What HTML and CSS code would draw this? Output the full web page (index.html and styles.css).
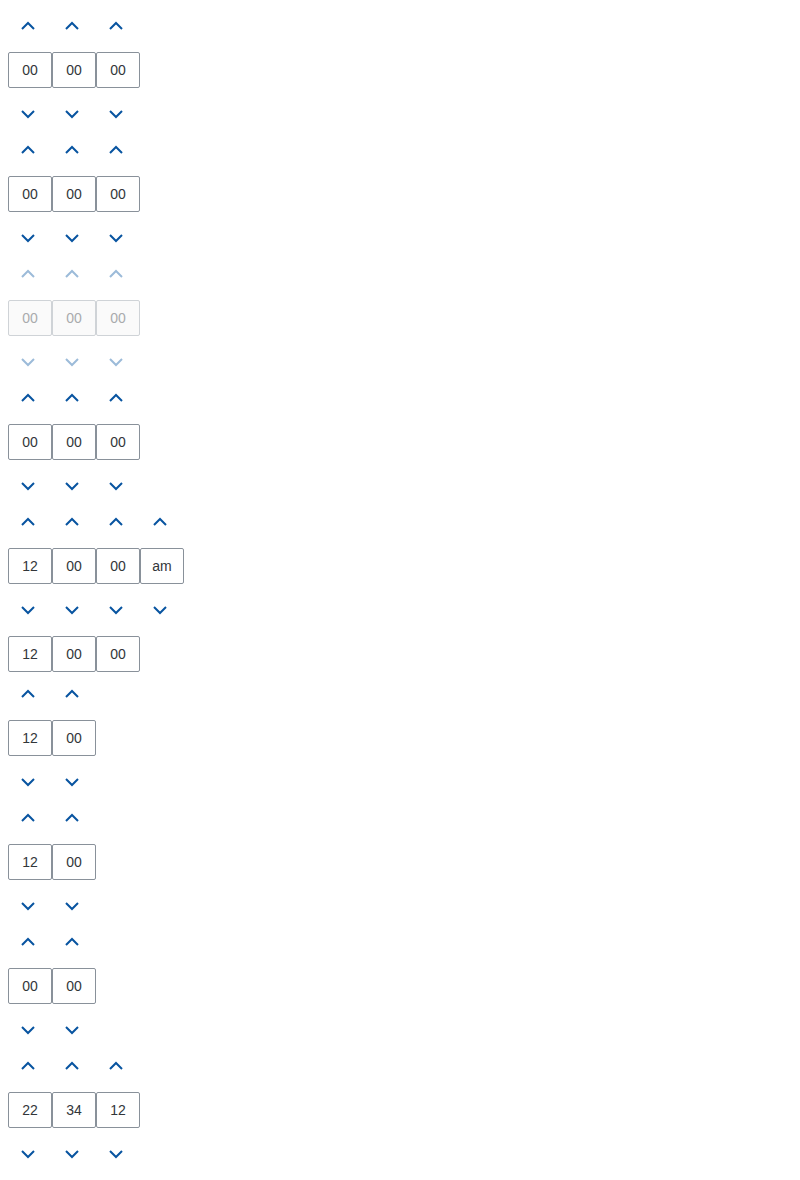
FILE: index.html
```html
<!DOCTYPE html>
<html>
<head>
<meta charset="utf-8">
<link rel="stylesheet" href="styles.css">
</head>
<body>
<div class="page">

  <div class="picker">
    <div class="btn-row"><button class="spin up"><svg viewBox="0 0 14 8"><polyline points="1,7 7,1 13,7"/></svg></button><button class="spin up"><svg viewBox="0 0 14 8"><polyline points="1,7 7,1 13,7"/></svg></button><button class="spin up"><svg viewBox="0 0 14 8"><polyline points="1,7 7,1 13,7"/></svg></button></div>
    <div class="field-row"><input class="field" value="00"><input class="field" value="00"><input class="field" value="00"></div>
    <div class="btn-row"><button class="spin"><svg viewBox="0 0 14 8"><polyline points="1,1 7,7 13,1"/></svg></button><button class="spin"><svg viewBox="0 0 14 8"><polyline points="1,1 7,7 13,1"/></svg></button><button class="spin"><svg viewBox="0 0 14 8"><polyline points="1,1 7,7 13,1"/></svg></button></div>
  </div>

  <div class="picker">
    <div class="btn-row"><button class="spin up"><svg viewBox="0 0 14 8"><polyline points="1,7 7,1 13,7"/></svg></button><button class="spin up"><svg viewBox="0 0 14 8"><polyline points="1,7 7,1 13,7"/></svg></button><button class="spin up"><svg viewBox="0 0 14 8"><polyline points="1,7 7,1 13,7"/></svg></button></div>
    <div class="field-row"><input class="field" value="00"><input class="field" value="00"><input class="field" value="00"></div>
    <div class="btn-row"><button class="spin"><svg viewBox="0 0 14 8"><polyline points="1,1 7,7 13,1"/></svg></button><button class="spin"><svg viewBox="0 0 14 8"><polyline points="1,1 7,7 13,1"/></svg></button><button class="spin"><svg viewBox="0 0 14 8"><polyline points="1,1 7,7 13,1"/></svg></button></div>
  </div>

  <div class="picker disabled">
    <div class="btn-row"><button class="spin up" disabled><svg viewBox="0 0 14 8"><polyline points="1,7 7,1 13,7"/></svg></button><button class="spin up" disabled><svg viewBox="0 0 14 8"><polyline points="1,7 7,1 13,7"/></svg></button><button class="spin up" disabled><svg viewBox="0 0 14 8"><polyline points="1,7 7,1 13,7"/></svg></button></div>
    <div class="field-row"><input class="field" value="00" disabled><input class="field" value="00" disabled><input class="field" value="00" disabled></div>
    <div class="btn-row"><button class="spin" disabled><svg viewBox="0 0 14 8"><polyline points="1,1 7,7 13,1"/></svg></button><button class="spin" disabled><svg viewBox="0 0 14 8"><polyline points="1,1 7,7 13,1"/></svg></button><button class="spin" disabled><svg viewBox="0 0 14 8"><polyline points="1,1 7,7 13,1"/></svg></button></div>
  </div>

  <div class="picker">
    <div class="btn-row"><button class="spin up"><svg viewBox="0 0 14 8"><polyline points="1,7 7,1 13,7"/></svg></button><button class="spin up"><svg viewBox="0 0 14 8"><polyline points="1,7 7,1 13,7"/></svg></button><button class="spin up"><svg viewBox="0 0 14 8"><polyline points="1,7 7,1 13,7"/></svg></button></div>
    <div class="field-row"><input class="field" value="00"><input class="field" value="00"><input class="field" value="00"></div>
    <div class="btn-row"><button class="spin"><svg viewBox="0 0 14 8"><polyline points="1,1 7,7 13,1"/></svg></button><button class="spin"><svg viewBox="0 0 14 8"><polyline points="1,1 7,7 13,1"/></svg></button><button class="spin"><svg viewBox="0 0 14 8"><polyline points="1,1 7,7 13,1"/></svg></button></div>
  </div>

  <div class="picker">
    <div class="btn-row"><button class="spin up"><svg viewBox="0 0 14 8"><polyline points="1,7 7,1 13,7"/></svg></button><button class="spin up"><svg viewBox="0 0 14 8"><polyline points="1,7 7,1 13,7"/></svg></button><button class="spin up"><svg viewBox="0 0 14 8"><polyline points="1,7 7,1 13,7"/></svg></button><button class="spin up"><svg viewBox="0 0 14 8"><polyline points="1,7 7,1 13,7"/></svg></button></div>
    <div class="field-row"><input class="field" value="12"><input class="field" value="00"><input class="field" value="00"><input class="field" value="am"></div>
    <div class="btn-row"><button class="spin"><svg viewBox="0 0 14 8"><polyline points="1,1 7,7 13,1"/></svg></button><button class="spin"><svg viewBox="0 0 14 8"><polyline points="1,1 7,7 13,1"/></svg></button><button class="spin"><svg viewBox="0 0 14 8"><polyline points="1,1 7,7 13,1"/></svg></button><button class="spin"><svg viewBox="0 0 14 8"><polyline points="1,1 7,7 13,1"/></svg></button></div>
  </div>

  <div class="picker plain">
    <div class="field-row"><input class="field" value="12"><input class="field" value="00"><input class="field" value="00"></div>
  </div>

  <div class="picker">
    <div class="btn-row"><button class="spin up"><svg viewBox="0 0 14 8"><polyline points="1,7 7,1 13,7"/></svg></button><button class="spin up"><svg viewBox="0 0 14 8"><polyline points="1,7 7,1 13,7"/></svg></button></div>
    <div class="field-row"><input class="field" value="12"><input class="field" value="00"></div>
    <div class="btn-row"><button class="spin"><svg viewBox="0 0 14 8"><polyline points="1,1 7,7 13,1"/></svg></button><button class="spin"><svg viewBox="0 0 14 8"><polyline points="1,1 7,7 13,1"/></svg></button></div>
  </div>

  <div class="picker">
    <div class="btn-row"><button class="spin up"><svg viewBox="0 0 14 8"><polyline points="1,7 7,1 13,7"/></svg></button><button class="spin up"><svg viewBox="0 0 14 8"><polyline points="1,7 7,1 13,7"/></svg></button></div>
    <div class="field-row"><input class="field" value="12"><input class="field" value="00"></div>
    <div class="btn-row"><button class="spin"><svg viewBox="0 0 14 8"><polyline points="1,1 7,7 13,1"/></svg></button><button class="spin"><svg viewBox="0 0 14 8"><polyline points="1,1 7,7 13,1"/></svg></button></div>
  </div>

  <div class="picker">
    <div class="btn-row"><button class="spin up"><svg viewBox="0 0 14 8"><polyline points="1,7 7,1 13,7"/></svg></button><button class="spin up"><svg viewBox="0 0 14 8"><polyline points="1,7 7,1 13,7"/></svg></button></div>
    <div class="field-row"><input class="field" value="00"><input class="field" value="00"></div>
    <div class="btn-row"><button class="spin"><svg viewBox="0 0 14 8"><polyline points="1,1 7,7 13,1"/></svg></button><button class="spin"><svg viewBox="0 0 14 8"><polyline points="1,1 7,7 13,1"/></svg></button></div>
  </div>

  <div class="picker">
    <div class="btn-row"><button class="spin up"><svg viewBox="0 0 14 8"><polyline points="1,7 7,1 13,7"/></svg></button><button class="spin up"><svg viewBox="0 0 14 8"><polyline points="1,7 7,1 13,7"/></svg></button><button class="spin up"><svg viewBox="0 0 14 8"><polyline points="1,7 7,1 13,7"/></svg></button></div>
    <div class="field-row"><input class="field" value="22"><input class="field" value="34"><input class="field" value="12"></div>
    <div class="btn-row"><button class="spin"><svg viewBox="0 0 14 8"><polyline points="1,1 7,7 13,1"/></svg></button><button class="spin"><svg viewBox="0 0 14 8"><polyline points="1,1 7,7 13,1"/></svg></button><button class="spin"><svg viewBox="0 0 14 8"><polyline points="1,1 7,7 13,1"/></svg></button></div>
  </div>

</div>
</body>
</html>
```

FILE: styles.css
```css
html, body {
  margin: 0;
  padding: 0;
  background: #ffffff;
}

body {
  font-family: "Liberation Sans", Arial, sans-serif;
  color: #32363a;
}

.page {
  padding: 8px;
  display: flex;
  flex-direction: column;
}

.picker {
  display: flex;
  flex-direction: column;
}

.btn-row {
  display: flex;
  height: 36px;
}

.spin {
  width: 40px;
  height: 36px;
  margin: 0 4px 0 0;
  padding: 0;
  border: 0;
  background: transparent;
  display: flex;
  align-items: center;
  justify-content: center;
  cursor: pointer;
}

.spin svg {
  width: 14px;
  height: 8px;
  display: block;
  overflow: visible;
}

.spin polyline {
  fill: none;
  stroke: #0854a0;
  stroke-width: 2;
  stroke-linecap: butt;
  stroke-linejoin: miter;
}

.field-row {
  display: flex;
  margin: 8px 0;
}

.field {
  width: 44px;
  height: 36px;
  box-sizing: border-box;
  margin: 0;
  padding: 0;
  border: 1px solid #89919a;
  border-radius: 2px;
  background: #ffffff;
  font-family: "Liberation Sans", Arial, sans-serif;
  font-size: 14px;
  color: #32363a;
  text-align: center;
  outline: none;
}

.picker.disabled .spin polyline {
  stroke: #9cbbd9;
}

.picker.disabled .field {
  background: #fafafa;
  border-color: #cfd3d7;
  color: #a9abad;
}

.picker.plain .field-row {
  margin: 8px 0 4px;
}
```
